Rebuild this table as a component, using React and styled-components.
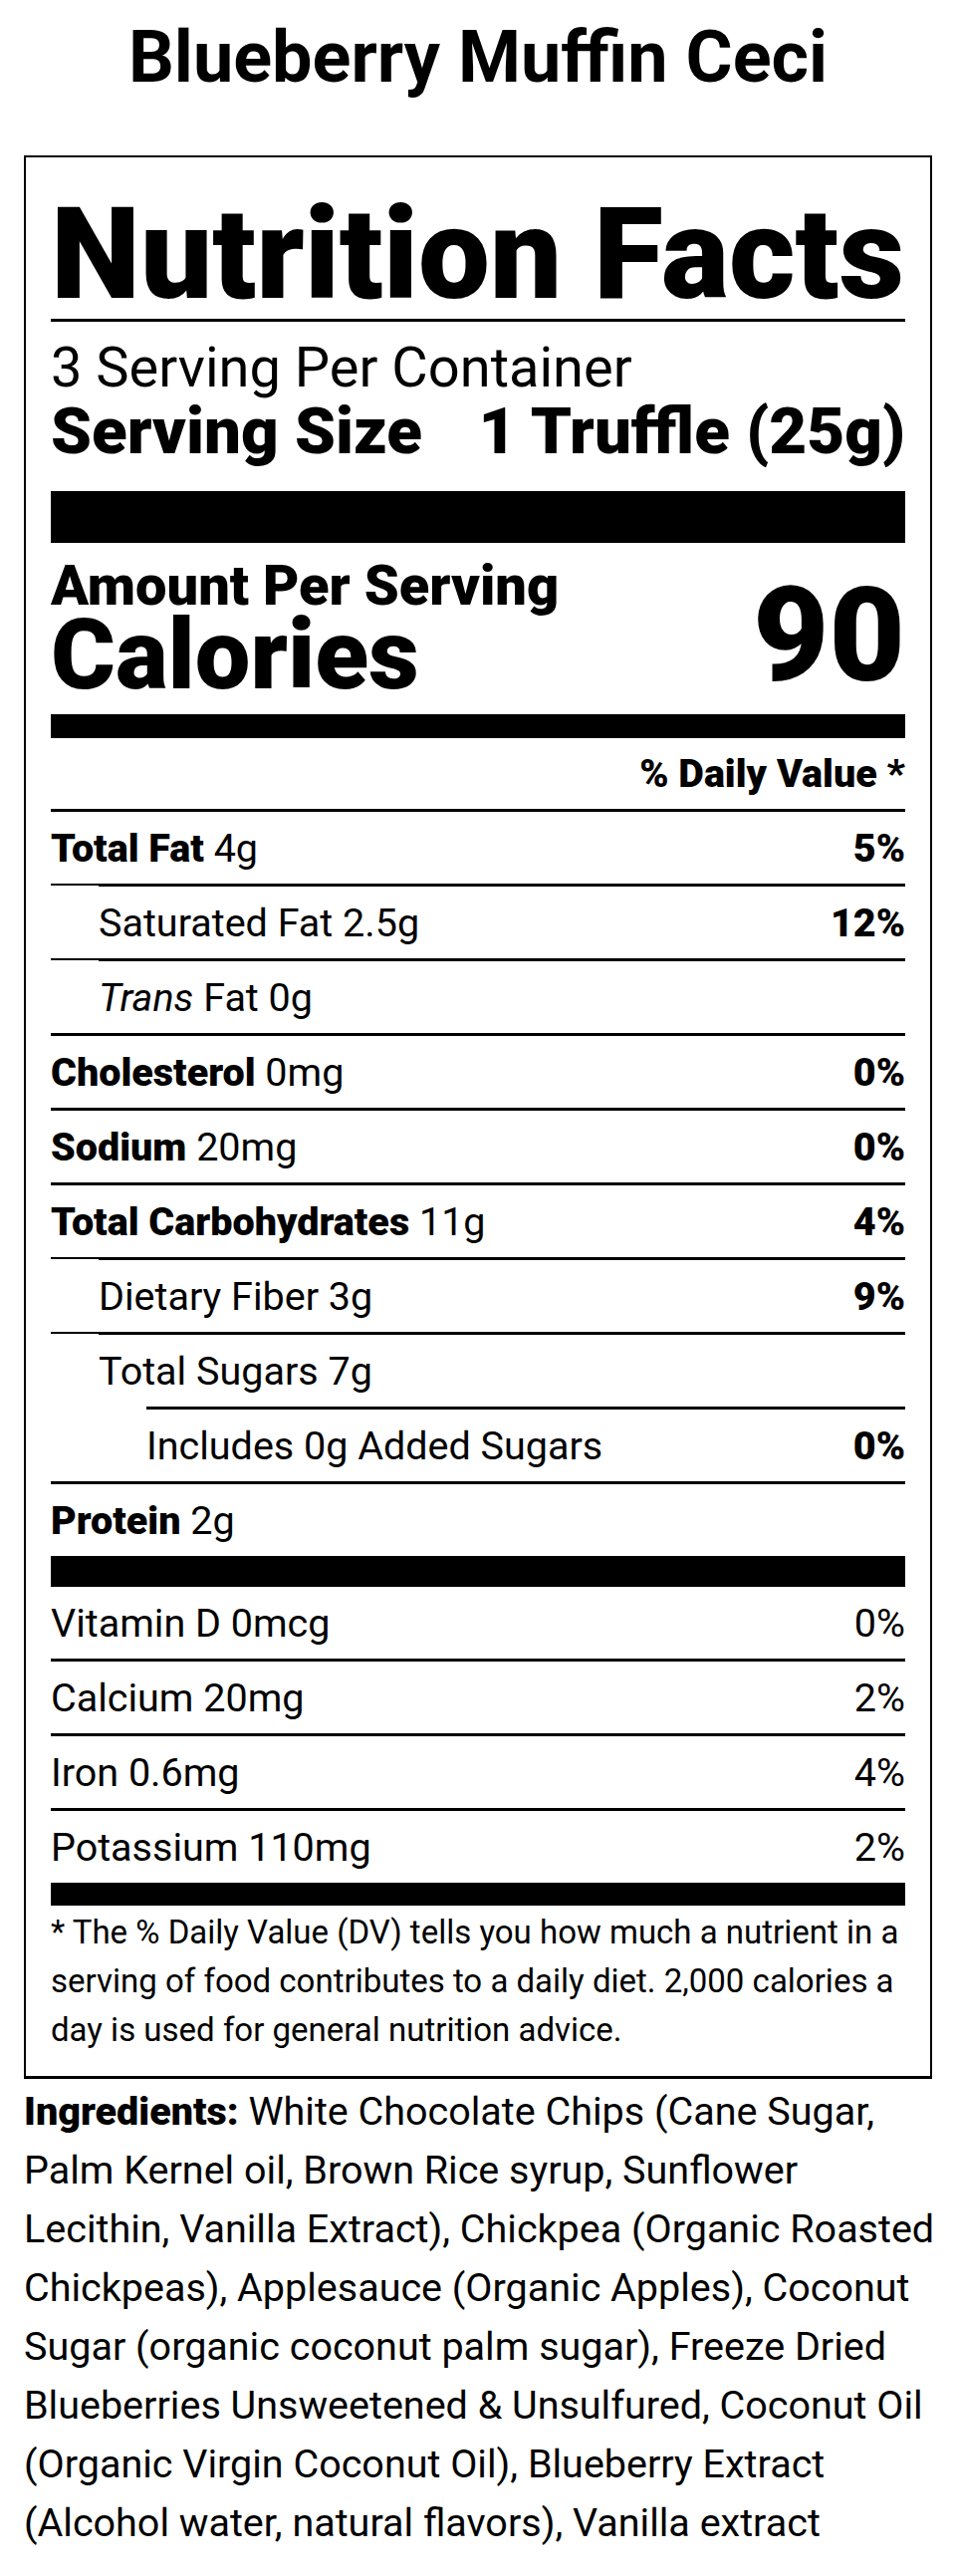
import React from 'react';
import styled, { createGlobalStyle } from 'styled-components';

const Global = createGlobalStyle`
  html, body { margin: 0; padding: 0; background: #fff; }
  body {
    font-family: Roboto, "Liberation Sans", Arial, sans-serif;
    color: #000;
  }
  * { box-sizing: border-box; }
`;

const Page = styled.div`
  width: 960px;
  padding: 16px 24px 21px;
`;

const Title = styled.h1`
  margin: 0 0 56px;
  text-align: center;
  font-size: 72px;
  font-weight: 700;
  line-height: 84px;
`;

const LabelBox = styled.section`
  border: 2px solid #000;
  border-bottom-width: 3px;
  padding: 33px 25px 22px;
`;

const Heading = styled.h2`
  margin: 0;
  font-size: 128px;
  font-weight: 900;
  line-height: 128px;
`;

const Rule = styled.div`
  height: ${(p) => p.$h}px;
  margin-top: ${(p) => p.$mt || 0}px;
  background: #000;
`;

const Servings = styled.div`
  margin-top: 19px;
  font-size: 56px;
  line-height: 55px;
  font-weight: 400;
`;

const ServingSize = styled.div`
  margin-top: 2px;
  display: flex;
  justify-content: space-between;
  font-size: 65.5px;
  line-height: 67px;
  font-weight: 900;
`;

const CaloriesBlock = styled.div`
  margin-top: 14px;
  display: flex;
  justify-content: space-between;
  align-items: flex-end;
  font-weight: 900;
`;

const CalLeft = styled.div`
  display: flex;
  flex-direction: column;
`;

const AmountLabel = styled.div`
  font-size: 56px;
  line-height: 58px;
`;

const CaloriesLabel = styled.div`
  font-size: 99px;
  line-height: 80px;
`;

const CaloriesValue = styled.div`
  font-size: 132px;
  line-height: 118px;
`;

const DVHeader = styled.div`
  margin-top: 18px;
  margin-bottom: 18px;
  text-align: right;
  font-size: 39.5px;
  line-height: 35px;
  font-weight: 900;
`;

const Divider = styled.div`
  display: flex;
  height: 3px;
`;

const DividerLead = styled.div`
  width: ${(p) => p.$w}px;
  height: 2px;
  background: ${(p) => (p.$show ? '#000' : 'transparent')};
`;

const DividerLine = styled.div`
  flex: 1;
  background: #000;
`;

const RowBody = styled.div`
  height: 72px;
  display: flex;
  align-items: center;
  justify-content: space-between;
  padding-left: ${(p) => p.$indent || 0}px;
  font-size: 39.5px;
`;

const Name = styled.span`
  font-weight: ${(p) => (p.$bold ? 900 : 400)};
  font-style: ${(p) => (p.$italic ? 'italic' : 'normal')};
`;

const Pct = styled.span`
  font-weight: ${(p) => (p.$bold ? 900 : 400)};
`;

const Footnote = styled.p`
  margin: 2px 0 0;
  font-size: 33px;
  line-height: 49px;
`;

const Ingredients = styled.p`
  margin: 3px -6px 0 0;
  font-size: 39.5px;
  line-height: 59px;
`;

const Strong = styled.strong`
  font-weight: 900;
`;

function Row({ indent = 0, lead = false, children, right, rightBold }) {
  return (
    <div>
      <Divider>
        <DividerLead $w={indent} $show={lead} />
        <DividerLine />
      </Divider>
      <RowBody $indent={indent}>
        <span>{children}</span>
        {right ? <Pct $bold={rightBold}>{right}</Pct> : null}
      </RowBody>
    </div>
  );
}

const nutrients = [
  { bold: 'Total Fat', amount: '4g', dv: '5%' },
  { name: 'Saturated Fat 2.5g', dv: '12%', indent: 48, lead: true },
  { italic: 'Trans', name: ' Fat 0g', indent: 48, lead: true },
  { bold: 'Cholesterol', amount: '0mg', dv: '0%' },
  { bold: 'Sodium', amount: '20mg', dv: '0%' },
  { bold: 'Total Carbohydrates', amount: '11g', dv: '4%' },
  { name: 'Dietary Fiber 3g', dv: '9%', indent: 48, lead: true },
  { name: 'Total Sugars 7g', indent: 48, lead: true },
  { name: 'Includes 0g Added Sugars', dv: '0%', indent: 96, lead: false },
  { bold: 'Protein', amount: '2g' },
];

const vitamins = [
  { name: 'Vitamin D 0mcg', dv: '0%' },
  { name: 'Calcium 20mg', dv: '2%' },
  { name: 'Iron 0.6mg', dv: '4%' },
  { name: 'Potassium 110mg', dv: '2%' },
];

export default function App() {
  return (
    <>
      <Global />
      <Page>
        <Title>Blueberry Muffin Ceci</Title>
        <LabelBox>
          <Heading>Nutrition Facts</Heading>
          <Rule $h={3} $mt={1} />
          <Servings>3 Serving Per Container</Servings>
          <ServingSize>
            <span>Serving Size</span>
            <span>1 Truffle (25g)</span>
          </ServingSize>
          <Rule $h={52} $mt={27} />
          <CaloriesBlock>
            <CalLeft>
              <AmountLabel>Amount Per Serving</AmountLabel>
              <CaloriesLabel>Calories</CaloriesLabel>
            </CalLeft>
            <CaloriesValue>90</CaloriesValue>
          </CaloriesBlock>
          <Rule $h={24} $mt={20} />
          <DVHeader>% Daily Value *</DVHeader>
          {nutrients.map((n, i) => (
            <Row
              key={i}
              indent={n.indent}
              lead={n.lead}
              right={n.dv}
              rightBold
            >
              {n.bold ? <Name $bold>{n.bold}</Name> : null}
              {n.bold ? ' ' + n.amount : null}
              {n.italic ? <Name $italic>{n.italic}</Name> : null}
              {n.name ? <Name>{n.name}</Name> : null}
            </Row>
          ))}
          <Rule $h={28} />
          {vitamins.map((v, i) => (
            <Row key={i} right={v.dv}>
              <Name>{v.name}</Name>
            </Row>
          ))}
          <Rule $h={23} />
          <Footnote>
            * The % Daily Value (DV) tells you how much a nutrient in a serving
            of food contributes to a daily diet. 2,000 calories a day is used
            for general nutrition advice.
          </Footnote>
        </LabelBox>
        <Ingredients>
          <Strong>Ingredients:</Strong> White Chocolate Chips (Cane Sugar, Palm
          Kernel oil, Brown Rice syrup, Sunflower Lecithin, Vanilla Extract),
          Chickpea (Organic Roasted Chickpeas), Applesauce (Organic Apples),
          Coconut Sugar (organic coconut palm sugar), Freeze Dried Blueberries
          Unsweetened &amp; Unsulfured, Coconut Oil (Organic Virgin Coconut Oil),
          Blueberry Extract (Alcohol water, natural flavors), Vanilla extract
        </Ingredients>
      </Page>
    </>
  );
}
